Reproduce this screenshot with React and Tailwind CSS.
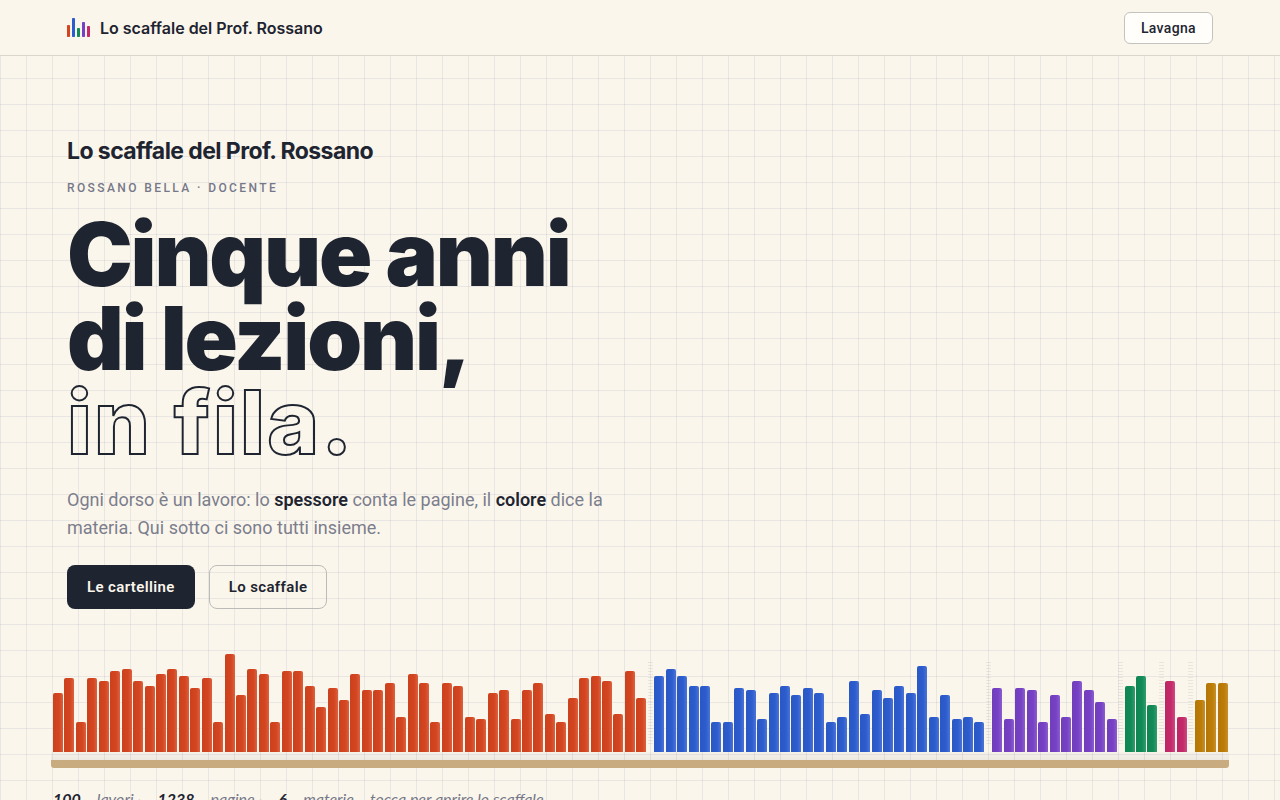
const subjects = [
  {
    name: "Rosso",
    color: "bg-[#d4451f]",
    heights: [
      59, 74, 30, 74, 71, 81, 83, 71, 66, 78, 83, 76, 64, 74, 30, 98, 57, 83, 78, 30, 81, 81, 66, 45, 64, 52,
      78, 62, 62, 69, 35, 78, 69, 30, 69, 66, 35, 33, 59, 62, 33, 62, 69, 38, 30, 54, 74, 76, 71, 38, 81, 54,
    ],
  },
  {
    name: "Blu",
    color: "bg-[#2c5cce]",
    heights: [
      76, 83, 76, 66, 66, 30, 30, 64, 62, 33, 59, 66, 57, 64, 59, 30, 35, 71, 38, 62, 54, 66, 59, 86, 35, 57,
      33, 35, 30,
    ],
  },
  { name: "Viola", color: "bg-[#7641c5]", heights: [64, 33, 64, 62, 30, 57, 35, 71, 62, 50, 33] },
  { name: "Verde", color: "bg-[#118b57]", heights: [66, 76, 47] },
  { name: "Rosa", color: "bg-[#c4296a]", heights: [71, 35] },
  { name: "Ocra", color: "bg-[#bd7c06]", heights: [52, 69, 69] },
];

function Logo() {
  return (
    <svg width="24" height="20" viewBox="0 0 24 20" aria-hidden="true">
      <rect x="0" y="7" width="3" height="12" rx="0.7" fill="#d4451f" />
      <rect x="5" y="0" width="3" height="19" rx="0.7" fill="#2c5cce" />
      <rect x="10" y="10" width="3" height="9" rx="0.7" fill="#118b57" />
      <rect x="15" y="4" width="3" height="15" rx="0.7" fill="#7641c5" />
      <rect x="20" y="8" width="3" height="11" rx="0.7" fill="#c4296a" />
    </svg>
  );
}

function Shelf() {
  return (
    <div className="mt-[43px]">
      <div className="flex h-[100px] items-end justify-between pr-px pl-0.5">
        {subjects.map((subject, i) => [
          i > 0 && (
            <span
              key={subject.name}
              className="mb-2 h-[82px] w-[5px] shrink-0 bg-[repeating-linear-gradient(to_bottom,rgba(30,35,48,0.08)_0_1px,transparent_1px_3px)]"
            />
          ),
          ...subject.heights.map((h, j) => (
            <span
              key={subject.name + j}
              style={{ height: h }}
              className={
                "max-w-[10px] flex-1 rounded-t-[2px] bg-linear-to-r from-black/5 via-transparent via-60% to-white/15 " +
                subject.color
              }
            />
          )),
        ])}
      </div>
      <div className="h-2 bg-linear-to-b from-[#1e2330]/2 to-[#1e2330]/6" />
      <div className="h-2 rounded-b-[3px] bg-[#c9ab80] shadow-[0_12px_20px_-6px_rgba(30,35,48,0.2)]" />
    </div>
  );
}

export default function App() {
  return (
    <div className="min-h-screen bg-[#fbf6ec] bg-[linear-gradient(to_right,rgba(90,100,150,0.11)_1px,transparent_1px),linear-gradient(to_bottom,rgba(90,100,150,0.11)_1px,transparent_1px)] bg-size-[26px_26px] font-[Roboto,sans-serif] text-[#1e2430]">
      <header className="flex h-14 items-center justify-between border-b border-[#dcd7cb] bg-[#fbf6ec] px-[67px]">
        <a href="#" className="flex items-center gap-[9px] font-[Inter,sans-serif] text-base font-semibold">
          <Logo />
          Lo scaffale del Prof. Rossano
        </a>
        <button className="h-8 rounded-md border border-[#c4c2bd] bg-[#fffefb] px-4 text-sm font-medium tracking-wide">
          Lavagna
        </button>
      </header>

      <main className="px-[51px] pb-10">
        <section className="px-4 pt-[79px]">
          <h2 className="font-[Inter,sans-serif] text-[23px] leading-8 font-bold tracking-tight">
            Lo scaffale del Prof. Rossano
          </h2>
          <p className="mt-[13px] text-xs leading-4 font-medium tracking-[0.2em] text-[#757889] uppercase">
            Rossano Bella · Docente
          </p>
          <h1 className="mt-4 font-[Inter,sans-serif] text-[88px] leading-[84px] font-black tracking-tight">
            <span className="block">Cinque anni</span>
            <span className="block">di lezioni,</span>
            <span className="block font-extrabold tracking-wide text-transparent [-webkit-text-stroke:2px_#1e2430]">
              in fila.
            </span>
          </h1>
          <p className="mt-[22px] max-w-[560px] text-lg leading-7 text-[#7c7e8c]">
            Ogni dorso è un lavoro: lo <strong className="font-semibold text-[#1e2430]">spessore</strong> conta le
            pagine, il <strong className="font-semibold text-[#1e2430]">colore</strong> dice la materia. Qui sotto ci
            sono tutti insieme.
          </p>
          <div className="mt-[23px] flex gap-3.5">
            <a
              href="#cartelline"
              className="flex h-11 items-center rounded-lg bg-[#1e2430] px-5 text-[15px] font-semibold tracking-wide text-[#fbf6ec]"
            >
              Le cartelline
            </a>
            <a
              href="#scaffale"
              className="flex h-11 items-center rounded-lg border border-[#bdbbb8] px-[19px] text-[15px] font-semibold tracking-wide"
            >
              Lo scaffale
            </a>
          </div>
        </section>

        <Shelf />
        <p className="mt-[19px] flex gap-4 px-0.5 font-[Lato,sans-serif] text-base leading-6 text-[#757889] italic">
          <b className="text-[#1e2430]">100</b>
          <span>lavori ·</span>
          <b className="text-[#1e2430]">1238</b>
          <span>pagine ·</span>
          <b className="text-[#1e2430]">6</b>
          <span>materie</span>
          <span>tocca per aprire lo scaffale</span>
        </p>
      </main>
    </div>
  );
}
